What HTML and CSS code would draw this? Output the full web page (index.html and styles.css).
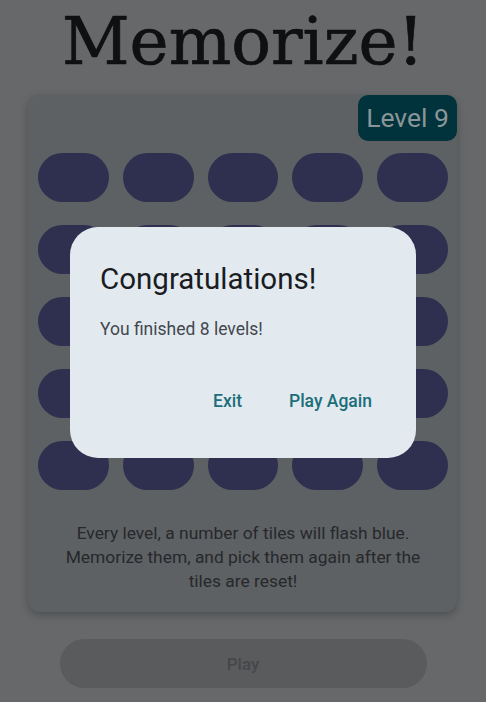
FILE: index.html
```html
<!DOCTYPE html>
<html lang="en">
<head>
<meta charset="utf-8">
<title>Memorize!</title>
<link rel="stylesheet" href="styles.css">
</head>
<body>
<main class="screen">
  <h1 class="title">Memorize!</h1>
  <section class="board">
    <div class="board-head"><span class="level">Level 9</span></div>
    <div class="tiles">
      <span class="tile"></span><span class="tile"></span><span class="tile"></span><span class="tile"></span><span class="tile"></span>
      <span class="tile"></span><span class="tile"></span><span class="tile"></span><span class="tile"></span><span class="tile"></span>
      <span class="tile"></span><span class="tile"></span><span class="tile"></span><span class="tile"></span><span class="tile"></span>
      <span class="tile"></span><span class="tile"></span><span class="tile"></span><span class="tile"></span><span class="tile"></span>
      <span class="tile"></span><span class="tile"></span><span class="tile"></span><span class="tile"></span><span class="tile"></span>
    </div>
    <p class="hint">Every level, a number of tiles will flash blue.<br>Memorize them, and pick them again after the<br>tiles are reset!</p>
  </section>
  <button class="play">Play</button>
</main>
<div class="dialog" role="dialog">
  <h2 class="dialog-title">Congratulations!</h2>
  <p class="dialog-text">You finished 8 levels!</p>
  <div class="dialog-actions">
    <button class="text-btn">Exit</button>
    <button class="text-btn">Play Again</button>
  </div>
</div>
</body>
</html>
```
FILE: styles.css
```css
* { box-sizing: border-box; }
html, body { margin: 0; padding: 0; }
body {
  width: 486px;
  height: 702px;
  overflow: hidden;
  background: #67686a;
  font-family: Roboto, "Noto Sans", sans-serif;
}
.screen {
  display: flex;
  flex-direction: column;
  align-items: center;
}
.title {
  margin: 0;
  height: 95px;
  font-family: "DejaVu Serif", serif;
  font-weight: 400;
  font-size: 66px;
  line-height: 84px;
  color: #0f1011;
  -webkit-text-stroke: 0.7px #0f1011;
}
.board {
  width: 429px;
  margin-left: -1px;
  background: #5e6163;
  border-radius: 12px;
  box-shadow: 0 3px 8px rgba(0,0,0,0.25);
  padding: 0 9px 19px 10px;
}
.board-head {
  display: flex;
  justify-content: flex-end;
  margin-right: -9px;
}
.level {
  background: #00333c;
  color: #8a9598;
  font-size: 26.5px;
  line-height: 46px;
  height: 46px;
  padding: 0 8px;
  border-radius: 10px;
}
.tiles {
  display: grid;
  grid-template-columns: repeat(5, 1fr);
  column-gap: 14px;
  row-gap: 23px;
  margin-top: 12px;
}
.tile {
  height: 49px;
  background: #2f2f50;
  border-radius: 25px;
}
.hint {
  margin: 31px -10px 0;
  text-align: center;
  font-size: 17.4px;
  line-height: 24px;
  color: #26282b;
}
.play {
  margin-top: 27px;
  width: 367px;
  height: 49px;
  border: none;
  border-radius: 25px;
  background: #5a5b5d;
  color: #46474a;
  font-family: Roboto, sans-serif;
  font-weight: 500;
  font-size: 17px;
}
.dialog {
  position: fixed;
  left: 70px;
  top: 227px;
  width: 346px;
  height: 231px;
  background: #e2eaf0;
  border-radius: 28px;
  padding: 33px 24px 0 30px;
  display: flex;
  flex-direction: column;
}
.dialog-title {
  margin: 0;
  font-weight: 400;
  font-size: 29.5px;
  line-height: 38px;
  color: #1a1c1f;
}
.dialog-text {
  margin: 18px 0 0;
  font-size: 17.5px;
  line-height: 26px;
  color: #42474e;
}
.dialog-actions {
  margin-top: 39px;
  display: flex;
  justify-content: flex-end;
  gap: 23px;
  padding-right: 8px;
}
.text-btn {
  border: none;
  background: transparent;
  padding: 8px 12px;
  font-family: Roboto, sans-serif;
  font-weight: 500;
  font-size: 17.5px;
  line-height: 24px;
  color: #1c6e79;
}
```
